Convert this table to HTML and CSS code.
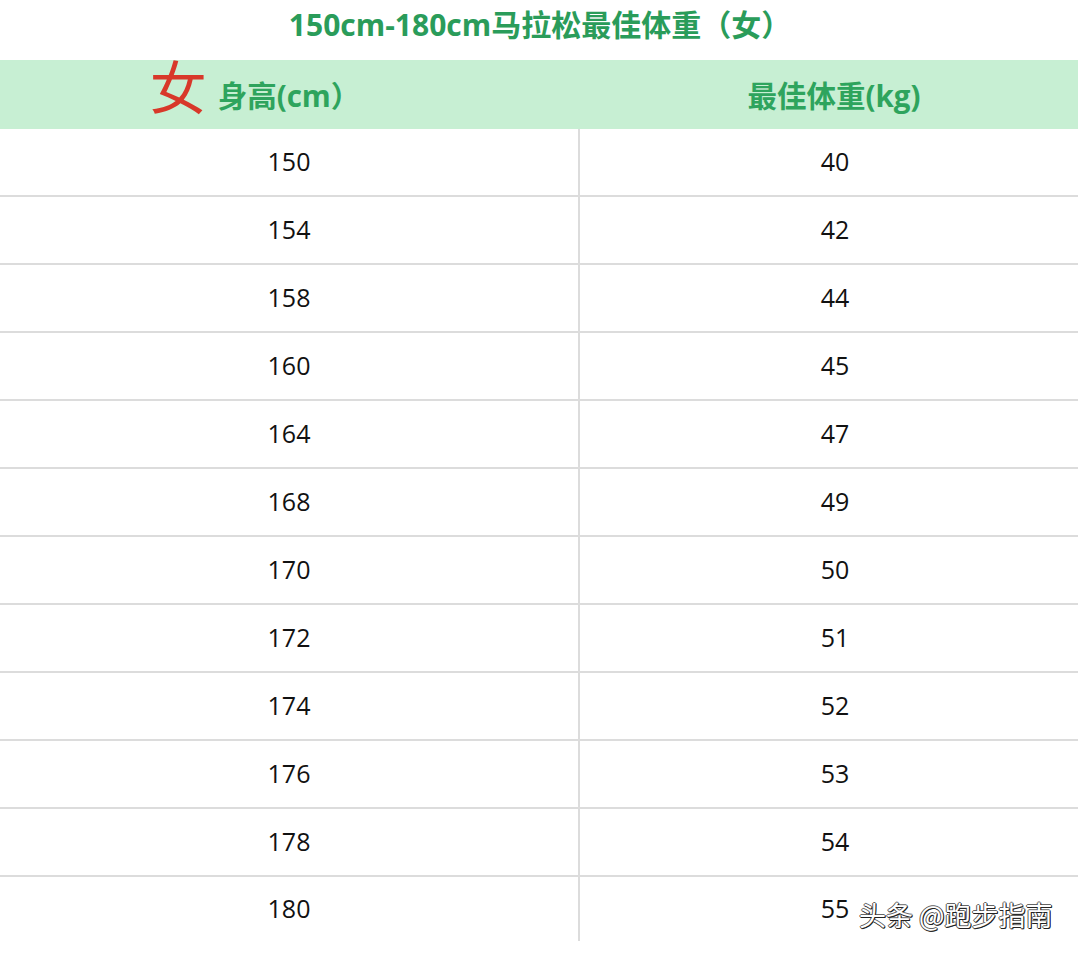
FILE: index.html
```html
<!DOCTYPE html>
<html lang="zh">
<head>
<meta charset="utf-8">
<link rel="stylesheet" href="styles.css">
</head>
<body>
<div class="page">
  <h1 class="title">150cm-180cm马拉松最佳体重（女）</h1>
  <div class="table">
    <div class="head">
      <div class="hcell left"><span class="female">女</span><span class="htext">身高(cm）</span></div>
      <div class="hcell right"><span class="htext">最佳体重(kg)</span></div>
    </div>
    <div class="body">
      <div class="row"><div class="cell left">150</div><div class="cell right">40</div></div>
      <div class="row"><div class="cell left">154</div><div class="cell right">42</div></div>
      <div class="row"><div class="cell left">158</div><div class="cell right">44</div></div>
      <div class="row"><div class="cell left">160</div><div class="cell right">45</div></div>
      <div class="row"><div class="cell left">164</div><div class="cell right">47</div></div>
      <div class="row"><div class="cell left">168</div><div class="cell right">49</div></div>
      <div class="row"><div class="cell left">170</div><div class="cell right">50</div></div>
      <div class="row"><div class="cell left">172</div><div class="cell right">51</div></div>
      <div class="row"><div class="cell left">174</div><div class="cell right">52</div></div>
      <div class="row"><div class="cell left">176</div><div class="cell right">53</div></div>
      <div class="row"><div class="cell left">178</div><div class="cell right">54</div></div>
      <div class="row last"><div class="cell left">180</div><div class="cell right">55</div></div>
    </div>
  </div>
  <div class="watermark">头条 @跑步指南</div>
</div>
</body>
</html>
```
FILE: styles.css
```css
html, body {
  margin: 0;
  padding: 0;
  background: #ffffff;
}
body {
  width: 1080px;
  height: 957px;
  overflow: hidden;
  font-family: "Open Sans", "Noto Sans", "Noto Sans CJK SC", sans-serif;
}
.page {
  position: relative;
  width: 1080px;
  height: 957px;
}
.title {
  margin: 0;
  height: 60px;
  display: flex;
  align-items: center;
  justify-content: center;
  padding-bottom: 14px;
  box-sizing: border-box;
  font-family: "Open Sans", "Noto Sans CJK SC", sans-serif;
  font-weight: 700;
  font-size: 30px;
  color: #2a9c5a;
}
.table {
  width: 1078px;
}
.head {
  display: grid;
  grid-template-columns: 578px 500px;
  height: 69px;
  background: #c7efd3;
}
.hcell {
  display: flex;
  align-items: center;
  justify-content: center;
}
.hcell.left {
  padding-right: 68px;
}
.hcell.right {
  padding-left: 12px;
}
.female {
  font-family: "Noto Sans CJK SC", sans-serif;
  font-weight: 400;
  font-size: 57px;
  line-height: 1;
  color: #d8382a;
  margin-right: 11px;
  margin-top: -20px;
}
.htext {
  font-family: "Open Sans", "Noto Sans CJK SC", sans-serif;
  font-weight: 700;
  font-size: 29.5px;
  color: #2ea45d;
}
.body {
  display: flex;
  flex-direction: column;
}
.row {
  display: grid;
  grid-template-columns: 578px 2px 498px;
  height: 68px;
  box-sizing: border-box;
  border-bottom: 2px solid #dcdcdc;
}
.row.last {
  border-bottom: none;
  height: 64px;
}
.row .cell.left {
  grid-column: 1;
}
.row .cell.right {
  grid-column: 3;
  border-left: 2px solid #dcdcdc;
  margin-left: -2px;
  padding-left: 12px;
}
.cell {
  display: flex;
  align-items: center;
  justify-content: center;
  padding-bottom: 3px;
  font-family: "Open Sans", "Noto Sans", sans-serif;
  font-size: 25px;
  color: #111111;
}
.watermark {
  position: absolute;
  left: 859px;
  top: 897px;
  font-family: "Noto Sans CJK SC", sans-serif;
  font-size: 27px;
  line-height: 36px;
  color: #ffffff;
  text-shadow: 1px 1px 0 #222222, -1px 0 0 #555555, 0 -1px 0 #666666, 1px 0 0 #333333, 0 1px 0 #222222;
}
```
